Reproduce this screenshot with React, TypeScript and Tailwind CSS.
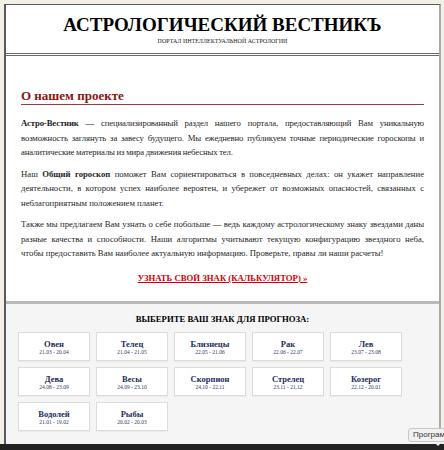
const signs = [
  { name: 'Овен', dates: '21.03 - 20.04' },
  { name: 'Телец', dates: '21.04 - 21.05' },
  { name: 'Близнецы', dates: '22.05 - 21.06' },
  { name: 'Рак', dates: '22.06 - 22.07' },
  { name: 'Лев', dates: '23.07 - 23.08' },
  { name: 'Дева', dates: '24.08 - 23.09' },
  { name: 'Весы', dates: '24.09 - 23.10' },
  { name: 'Скорпион', dates: '24.10 - 22.11' },
  { name: 'Стрелец', dates: '23.11 - 21.12' },
  { name: 'Козерог', dates: '22.12 - 20.01' },
  { name: 'Водолей', dates: '21.01 - 19.02' },
  { name: 'Рыбы', dates: '20.02 - 20.03' },
]

function SignCard({ name, dates }: { name: string; dates: string }) {
  return (
    <a
      href="#"
      className="flex h-[29px] w-[72px] flex-col items-center justify-center border border-[#dcdcdc] bg-white pt-[2px] shadow-[0_1px_1px_rgba(0,0,0,0.04)]"
    >
      <span className="text-[8.5px] font-bold leading-[10px] text-[#1c2d5c]">{name}</span>
      <span className="text-[5.5px] leading-[6px] text-[#2d3a66]">{dates}</span>
    </a>
  )
}

export default function App() {
  return (
    <div className="relative min-h-screen overflow-hidden bg-[#f3f0e8] font-['Liberation_Serif','Times_New_Roman',serif] text-[#1a1a1a]">
      <div className="pl-[4px] pr-[3px] pt-[4px]">
        <div className="border-l-2 border-r-2 border-t border-l-[#5a5a5a] border-r-[#a9a9a9] border-t-[#5a5a5a] bg-white">
          <header className="border-b-[3px] border-double border-b-[#6b6b6b] pb-[8px] pt-[8px] text-center">
            <h1 className="text-[19px] font-bold leading-[24px] text-black">АСТРОЛОГИЧЕСКИЙ ВЕСТНИКЪ</h1>
            <p className="text-[6px] leading-[8px] text-[#222]">ПОРТАЛ ИНТЕЛЛЕКТУАЛЬНОЙ АСТРОЛОГИИ</p>
          </header>

          <main className="px-[15px] pb-[16px] pt-[32px]">
            <h2 className="border-b border-b-[#9e3a3a] text-[13px] font-bold leading-[16px] text-[#8b1414]">
              О нашем проекте
            </h2>
            <div className="mt-[11px] text-justify text-[8.7px] leading-[14.5px] text-[#1f1f1f]">
              <p className="mb-[7px] tracking-[-0.12px] [word-spacing:-0.3px]">
                <b>Астро-Вестник</b> — специализированный раздел нашего портала, предоставляющий Вам уникальную
                возможность заглянуть за завесу будущего. Мы ежедневно публикуем точные периодические гороскопы и
                аналитические материалы из мира движения небесных тел.
              </p>
              <p className="mb-[7px]">
                Наш <b>Общий гороскоп</b> поможет Вам сориентироваться в повседневных делах: он укажет направление
                деятельности, в котором успех наиболее вероятен, и убережет от возможных опасностей, связанных с
                неблагоприятным положением планет.
              </p>
              <p>
                Также мы предлагаем Вам узнать о себе побольше — ведь каждому астрологическому знаку звездами даны
                разные качества и способности. Наши алгоритмы учитывают текущую конфигурацию звездного неба, чтобы
                предоставить Вам наиболее актуальную информацию. Проверьте, правы ли наши расчеты!
              </p>
            </div>
            <div className="mt-[10px] text-center text-[8.7px] leading-[14px]">
              <a href="#" className="font-bold text-[#d40000] underline">
                УЗНАТЬ СВОЙ ЗНАК (КАЛЬКУЛЯТОР) »
              </a>
            </div>
          </main>

          <section className="border-t-[3px] border-t-[#b9b9b9] bg-[#f5f5f5] px-[12px] pb-[13px] pt-[9px]">
            <h3 className="mb-[7px] text-center text-[8.7px] font-bold leading-[12px] text-black">
              ВЫБЕРИТЕ ВАШ ЗНАК ДЛЯ ПРОГНОЗА:
            </h3>
            <div className="grid grid-cols-[repeat(5,72px)] gap-[6px]">
              {signs.map((s) => (
                <SignCard key={s.name} name={s.name} dates={s.dates} />
              ))}
            </div>
          </section>
        </div>
      </div>
      <footer className="h-[20px] bg-[#232323]" />

      <div className="absolute left-[408px] top-[428px] flex h-[14px] items-center whitespace-nowrap rounded-l-[3px] border border-[#c8c8c8] bg-[#f1f1f1] pl-[4px] font-['Liberation_Sans',Arial,sans-serif] text-[8px] text-[#333]">
        Програм
      </div>
      <div className="absolute left-[434px] top-[442px] h-0 w-0 border-l-[4px] border-r-[4px] border-t-[4px] border-l-transparent border-r-transparent border-t-[#f1f1f1]" />
    </div>
  )
}
